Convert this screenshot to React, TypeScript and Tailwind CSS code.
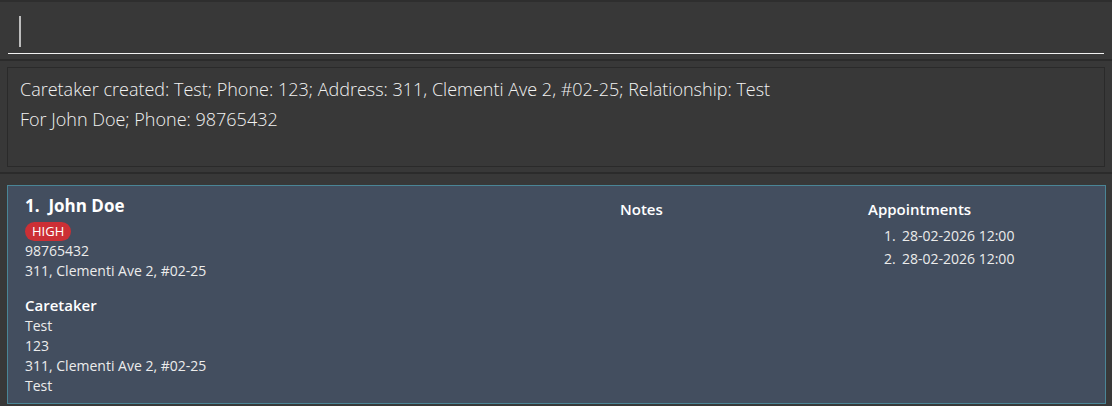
import React from 'react';

const caretaker = ['Test', '123', '311, Clementi Ave 2, #02-25', 'Test'];
const appointments = ['28-02-2026 12:00', '28-02-2026 12:00'];

export default function App() {
  return (
    <div
      className="h-[406px] w-full overflow-hidden bg-[#383838] flex flex-col text-[#ececec]"
      style={{ fontFamily: '"Open Sans", "Noto Sans", sans-serif' }}
    >
      {/* command box */}
      <div className="h-[59px] border-t-2 border-[#2e2e2e] px-2 pt-[14px]">
        <div className="h-[38px] border-b border-[#f2f2f2] w-[1096px] pl-[11px]">
          <div className="w-[2px] h-[31px] bg-[#bdbdbd]" />
        </div>
      </div>
      <div className="h-[2px] bg-[#2b2b2b]" />

      {/* result display */}
      <div className="h-[111px] pt-[6px] pl-[7px]">
        <div className="w-[1098px] h-[100px] border border-[#2a2a2a] px-3 pt-[6px] font-light text-[18px] leading-[30px] text-[#f2f2f2]">
          <div>Caretaker created: Test; Phone: 123; Address: 311, Clementi Ave 2, #02-25; Relationship: Test</div>
          <div>For John Doe; Phone: 98765432</div>
        </div>
      </div>
      <div className="h-[2px] bg-[#2b2b2b]" />

      {/* person list */}
      <div className="flex-1 pt-[11px] pl-[7px]">
        <div className="w-[1099px] h-[219px] bg-[#434e5f] border border-[#4a8596] flex pl-[17px] pt-[9px] text-[14px]">
          <div className="w-[595px] flex flex-col">
            <div className="text-[17px] font-bold leading-[22px] text-white">1.&nbsp; John Doe</div>
            <div className="mt-[3px]">
              <span className="inline-block bg-[#cc2f35] text-white rounded-full px-[7px] text-[13px] leading-[19px]">HIGH</span>
            </div>
            <div className="leading-[20px]">98765432</div>
            <div className="leading-[20px]">311, Clementi Ave 2, #02-25</div>
            <div className="mt-[13px] font-semibold text-[15px] leading-[22px] text-white">Caretaker</div>
            {caretaker.map((c, i) => (
              <div key={i} className="leading-[20px]">{c}</div>
            ))}
          </div>
          <div className="w-[248px] pt-[4px]">
            <div className="font-semibold text-[15px] leading-[20px] text-white">Notes</div>
          </div>
          <div className="flex-1 pt-[4px]">
            <div className="font-semibold text-[15px] leading-[20px] text-white">Appointments</div>
            <ol className="pl-[16px] mt-[5px]">
              {appointments.map((a, i) => (
                <li key={i} className="leading-[23px]">
                  <span className="inline-block w-[18px]">{i + 1}.</span>
                  {a}
                </li>
              ))}
            </ol>
          </div>
        </div>
      </div>
    </div>
  );
}
